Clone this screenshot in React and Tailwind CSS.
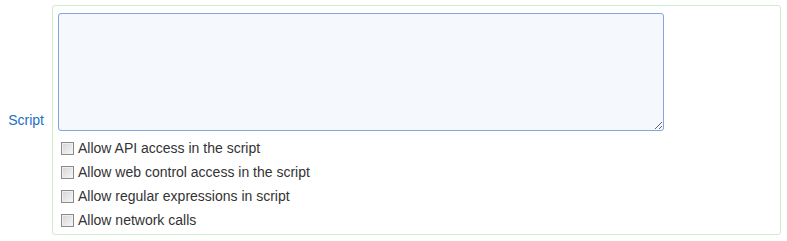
export default function App() {
  const opts = [
    "Allow API access in the script",
    "Allow web control access in the script",
    "Allow regular expressions in script",
    "Allow network calls",
  ];
  return (
    <div className="w-[787px] h-[241px] bg-white pt-[5px] flex font-['Liberation_Sans',Arial,sans-serif] text-[14px]">
      <div className="w-[52px] h-[230px] flex items-center justify-end pr-[8px] text-[#1a6fc9]">
        Script
      </div>
      <div className="w-[729px] h-[230px] border border-[#cdeccb] rounded-[3px] pl-[5px] pt-[7px] flex flex-col">
        <textarea className="w-[606px] h-[118px] shrink-0 border border-[#86a6dc] rounded-[3px] bg-[#f5f9fd] outline-none resize" />
        <div className="mt-[5px] flex flex-col">
          {opts.map((t) => (
            <label key={t} className="h-[24px] flex items-center pl-[3px] text-[#333333]">
              <span className="w-[13px] h-[13px] border border-[#8a8a8a] bg-gradient-to-br from-[#d4d4d4] to-[#f8f8f8] shadow-[inset_0_0_0_1px_#efefef] mr-[4px] shrink-0" />
              <span className="leading-none">{t}</span>
            </label>
          ))}
        </div>
      </div>
    </div>
  );
}
